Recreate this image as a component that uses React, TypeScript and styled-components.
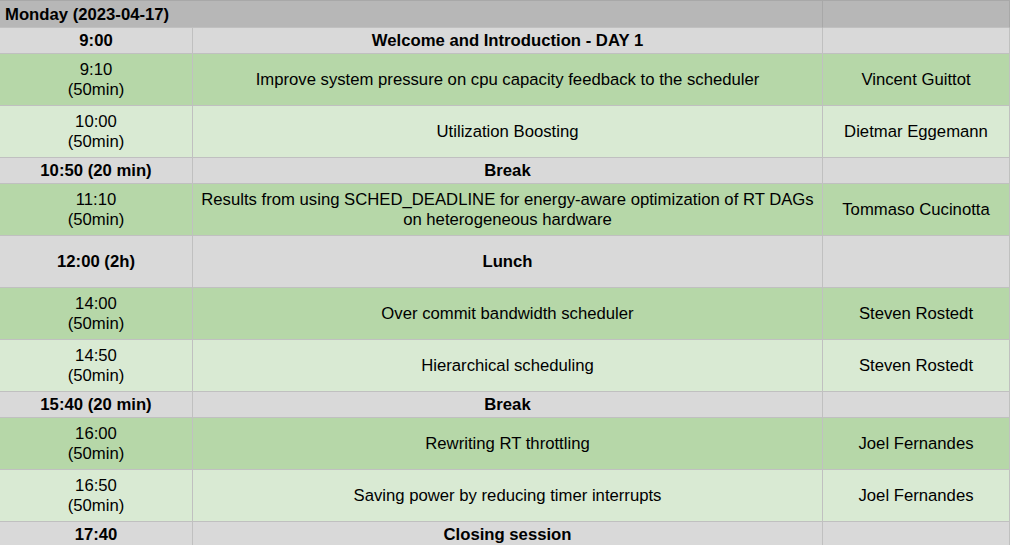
import React from 'react';
import styled, { createGlobalStyle } from 'styled-components';

type Tone = 'gray' | 'green' | 'light';

interface Slot {
  time: string[];
  title: string[];
  speaker?: string;
  tone: Tone;
  tall?: boolean;
}

const slots: Slot[] = [
  { time: ['9:00'], title: ['Welcome and Introduction - DAY 1'], tone: 'gray' },
  {
    time: ['9:10', '(50min)'],
    title: ['Improve system pressure on cpu capacity feedback to the scheduler'],
    speaker: 'Vincent Guittot',
    tone: 'green',
  },
  {
    time: ['10:00', '(50min)'],
    title: ['Utilization Boosting'],
    speaker: 'Dietmar Eggemann',
    tone: 'light',
  },
  { time: ['10:50 (20 min)'], title: ['Break'], tone: 'gray' },
  {
    time: ['11:10', '(50min)'],
    title: [
      'Results from using SCHED_DEADLINE for energy-aware optimization of RT DAGs',
      'on heterogeneous hardware',
    ],
    speaker: 'Tommaso Cucinotta',
    tone: 'green',
  },
  { time: ['12:00 (2h)'], title: ['Lunch'], tone: 'gray', tall: true },
  {
    time: ['14:00', '(50min)'],
    title: ['Over commit bandwidth scheduler'],
    speaker: 'Steven Rostedt',
    tone: 'green',
  },
  {
    time: ['14:50', '(50min)'],
    title: ['Hierarchical scheduling'],
    speaker: 'Steven Rostedt',
    tone: 'light',
  },
  { time: ['15:40 (20 min)'], title: ['Break'], tone: 'gray' },
  {
    time: ['16:00', '(50min)'],
    title: ['Rewriting RT throttling'],
    speaker: 'Joel Fernandes',
    tone: 'green',
  },
  {
    time: ['16:50', '(50min)'],
    title: ['Saving power by reducing timer interrupts'],
    speaker: 'Joel Fernandes',
    tone: 'light',
  },
  { time: ['17:40'], title: ['Closing session'], tone: 'gray' },
];

const fills: Record<Tone, string> = {
  gray: '#d9d9d9',
  green: '#b6d7a8',
  light: '#d9ead3',
};

const GlobalStyle = createGlobalStyle`
  body {
    margin: 0;
    background: #ffffff;
    font-family: "Liberation Sans", Arial, sans-serif;
    color: #000000;
  }
`;

const Sheet = styled.div`
  display: grid;
  grid-template-columns: 193px 630px 187px;
  width: 1010px;
  font-size: 16.7px;
  line-height: 20px;
`;

const Cell = styled.div<{ $tone: Tone; $bold?: boolean; $lines: number }>`
  box-sizing: border-box;
  height: ${p => (p.$lines > 1 ? 52 : 26)}px;
  padding-top: 1px;
  background: ${p => fills[p.$tone]};
  border-right: 1px solid #c0c0c0;
  border-bottom: 1px solid #c0c0c0;
  font-weight: ${p => (p.$bold ? 700 : 400)};
  display: flex;
  flex-direction: column;
  align-items: center;
  justify-content: center;
  text-align: center;
  white-space: nowrap;
`;

const DayTitle = styled.div`
  grid-column: span 2;
  box-sizing: border-box;
  height: 28px;
  padding: 1px 5px 0;
  background: #b7b7b7;
  border-top: 1px solid #a8a8a8;
  border-right: 1px solid #a8a8a8;
  border-bottom: 1px solid #c0c0c0;
  font-weight: 700;
  display: flex;
  align-items: center;
`;

const DayBlank = styled.div`
  box-sizing: border-box;
  height: 28px;
  background: #b7b7b7;
  border-top: 1px solid #a8a8a8;
  border-right: 1px solid #a8a8a8;
  border-bottom: 1px solid #c0c0c0;
`;

const Line = styled.span`
  display: block;
`;

const App: React.FC = () => (
  <>
    <GlobalStyle />
    <Sheet>
      <DayTitle>Monday (2023-04-17)</DayTitle>
      <DayBlank />
      {slots.map((s, i) => {
        const lines = s.tall ? 2 : Math.max(s.time.length, s.title.length);
        const bold = s.tone === 'gray';
        return (
          <React.Fragment key={i}>
            <Cell $tone={s.tone} $bold={bold} $lines={lines}>
              {s.time.map(t => (
                <Line key={t}>{t}</Line>
              ))}
            </Cell>
            <Cell $tone={s.tone} $bold={bold} $lines={lines}>
              {s.title.map(t => (
                <Line key={t}>{t}</Line>
              ))}
            </Cell>
            <Cell $tone={s.tone} $lines={lines}>
              {s.speaker}
            </Cell>
          </React.Fragment>
        );
      })}
    </Sheet>
  </>
);

export default App;
